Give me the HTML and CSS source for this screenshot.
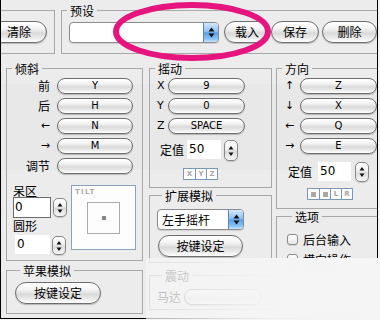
FILE: index.html
```html
<!DOCTYPE html>
<html lang="zh">
<head>
<meta charset="utf-8">
<title>Joystick</title>
<link rel="stylesheet" href="styles.css">
</head>
<body>
<div class="win">
  <div class="band"></div>
  <div class="top">
    <div class="clearbox"><span class="btn lg w56">清除</span></div>
    <fieldset class="grp preset">
      <legend>预设</legend>
      <div class="prow">
        <div class="popup w150"><span class="pv"></span><span class="pstep"><svg width="7" height="11" viewBox="0 0 7 11"><path d="M3.5 0.5 L6.5 4.5 H0.5Z M3.5 10.5 L6.5 6.5 H0.5Z" fill="#111"/></svg></span></div>
        <span class="btn lg w46 ml5">载入</span>
        <span class="btn lg w48 ml1">保存</span>
        <span class="btn lg w55 ml3">删除</span>
      </div>
    </fieldset>
  </div>

  <div class="main">
    <div class="col c1">
      <fieldset class="grp tilt">
        <legend>倾斜</legend>
        <div class="keys k1">
          <span class="lbl">前</span><span class="btn sm">Y</span>
          <span class="lbl">后</span><span class="btn sm">H</span>
          <span class="lbl arr">←</span><span class="btn sm">N</span>
          <span class="lbl arr">→</span><span class="btn sm">M</span>
          <span class="lbl">调节</span><span class="btn sm"></span>
        </div>
        <div class="lower">
          <div class="fields">
            <div class="flbl">呆区</div>
            <div class="frow r1"><span class="field focus w38">0</span><span class="stepper"><svg width="12" height="18" viewBox="0 0 12 18"><path d="M6 4 L8.5 7.5 H3.5Z M6 14 L8.5 10.5 H3.5Z" fill="#111"/></svg></span></div>
            <div class="flbl l2">圆形</div>
            <div class="frow r2"><span class="field w35">0</span><span class="stepper"><svg width="12" height="18" viewBox="0 0 12 18"><path d="M6 4 L8.5 7.5 H3.5Z M6 14 L8.5 10.5 H3.5Z" fill="#111"/></svg></span></div>
          </div>
          <div class="tiltbox">
            <div class="tiltlbl">TILT</div>
            <div class="pad"><span class="dot"></span></div>
          </div>
        </div>
      </fieldset>
      <fieldset class="grp apple">
        <legend>苹果模拟</legend>
        <span class="btn lg w86">按键设定</span>
      </fieldset>
    </div>

    <div class="col c2">
      <fieldset class="grp shake">
        <legend>摇动</legend>
        <div class="keys k2">
          <span class="lbl2">X</span><span class="btn sm">9</span>
          <span class="lbl2">Y</span><span class="btn sm">0</span>
          <span class="lbl2">Z</span><span class="btn sm">SPACE</span>
        </div>
        <div class="vrow v2">
          <span class="vlbl">定值</span><span class="field w34">50</span><span class="stepper st2"><svg width="12" height="18" viewBox="0 0 12 18"><path d="M6 4 L8.5 7.5 H3.5Z M6 14 L8.5 10.5 H3.5Z" fill="#111"/></svg></span>
        </div>
        <div class="strip s3"><span>X</span><span>Y</span><span>Z</span></div>
      </fieldset>
      <fieldset class="grp ext">
        <legend>扩展模拟</legend>
        <div class="popup w87"><span class="pv">左手摇杆</span><span class="pstep"><svg width="7" height="11" viewBox="0 0 7 11"><path d="M3.5 0.5 L6.5 4.5 H0.5Z M3.5 10.5 L6.5 6.5 H0.5Z" fill="#111"/></svg></span></div>
        <span class="btn lg w85 extbtn">按键设定</span>
      </fieldset>
      <fieldset class="grp vib">
        <legend>震动</legend>
        <div class="vibrow"><span class="vlbl">马达</span><span class="btn sm w78"></span></div>
      </fieldset>
    </div>

    <div class="col c3">
      <fieldset class="grp dir">
        <legend>方向</legend>
        <div class="keys k3">
          <span class="lbl arr">↑</span><span class="btn sm">Z</span>
          <span class="lbl arr">↓</span><span class="btn sm">X</span>
          <span class="lbl arr">←</span><span class="btn sm">Q</span>
          <span class="lbl arr">→</span><span class="btn sm">E</span>
        </div>
        <div class="vrow v3">
          <span class="vlbl">定值</span><span class="field w33">50</span><span class="stepper st3"><svg width="12" height="18" viewBox="0 0 12 18"><path d="M6 4 L8.5 7.5 H3.5Z M6 14 L8.5 10.5 H3.5Z" fill="#111"/></svg></span>
        </div>
        <div class="strip s4"><span class="sq"></span><span class="sq"></span><span>L</span><span>R</span></div>
      </fieldset>
      <fieldset class="grp opts">
        <legend>选项</legend>
        <label class="chk"><span class="box"></span>后台输入</label>
        <label class="chk"><span class="box"></span>横向操作</label>
      </fieldset>
    </div>
  </div>
</div>
<div class="fade"></div>
<svg class="mark" width="380" height="320" viewBox="0 0 380 320"><ellipse cx="192" cy="31.5" rx="76" ry="26.5" fill="none" stroke="#e5147e" stroke-width="6"/></svg>
</body>
</html>
```
FILE: styles.css
```css
* { box-sizing: border-box; }
body {
  margin: 0;
  background: #f4f4f4;
  font-family: "Noto Sans CJK SC", "DejaVu Sans", sans-serif;
  font-size: 12px;
  color: #000;
  position: relative;
  width: 380px;
  height: 320px;
  overflow: hidden;
}
.win {
  position: relative;
  width: 378px;
  height: 319px;
  border-left: 1px solid #000;
  border-right: 1px solid #000;
  border-bottom: 1px solid #000;
  background: #ececec;
  overflow: hidden;
}
.band {
  position: absolute;
  left: 0; right: 0;
  top: 84px; height: 86px;
  background: #e8e8e8;
}
.top, .main { position: relative; }

/* group boxes */
.grp {
  margin: 0;
  padding: 0;
  min-width: 0;
  border: 1px solid #a8a8a8;
  display: block;
}
.grp legend {
  margin-left: 5px;
  padding: 0 3px;
  line-height: 15px;
  height: 15px;
  font-size: 12px;
}

/* buttons */
.btn {
  display: block;
  flex: none;
  border: 1px solid #6e6e6e;
  background: linear-gradient(to bottom, #ffffff 0%, #f5f5f5 30%, #e4e4e4 48%, #d9d9d9 56%, #ebebeb 80%, #ffffff 100%);
  box-shadow: 0 1px 1px rgba(0,0,0,0.22);
  text-align: center;
  white-space: nowrap;
  color: #000;
}
.btn.lg { height: 22px; border-radius: 11px; line-height: 20px; font-size: 12px; }
.btn.sm { height: 16px; border-radius: 8px; line-height: 14px; font-family: "DejaVu Sans", sans-serif; font-size: 10px; }
.w56 { width: 56px; } .w46 { width: 46px; } .w48 { width: 48px; } .w55 { width: 55px; }
.w86 { width: 86px; } .w85 { width: 85px; } .w78 { width: 78px; }
.ml5 { margin-left: 5px; } .ml1 { margin-left: 1px; } .ml3 { margin-left: 3px; }

/* top row */
.top { display: flex; align-items: flex-start; margin-top: 3px; height: 51px; }
.clearbox {
  flex: none;
  margin-top: 7px;
  width: 54px;
  height: 44px;
  border: 1px solid #a8a8a8;
  border-left: 0;
  display: flex;
  justify-content: flex-end;
  align-items: flex-start;
  padding: 10px 7px 0 0;
  overflow: hidden;
}
.preset { flex: none; width: 330px; margin-left: 6px; height: 51px; }
.prow { display: flex; align-items: flex-start; margin: 3px 0 0 7px; }

/* popup */
.popup {
  display: flex;
  flex: none;
  height: 21px;
  border: 1px solid #8c8c8c;
  border-radius: 4px;
  background: #fff;
  overflow: hidden;
  box-shadow: 0 1px 1px rgba(0,0,0,0.12);
}
.prow .popup { margin-top: 1px; }
.w150 { width: 150px; } .w87 { width: 87px; }
.pv { flex: 1; padding-left: 4px; line-height: 19px; font-size: 12px; }
.pstep {
  width: 15px;
  border-left: 1px solid #5c86b8;
  background: linear-gradient(to bottom, #d5e8fb 0%, #8cc0f2 45%, #5a9fe6 52%, #8ac4f6 85%, #c8e6ff 100%);
  display: flex;
  align-items: center;
  justify-content: center;
}

/* main columns */
.main { display: flex; align-items: flex-start; margin-top: 7px; padding-left: 5px; }
.col { flex: none; display: flex; flex-direction: column; }
.c1 { width: 137px; }
.c2 { width: 123px; margin-left: 6px; }
.c3 { width: 122px; margin-left: 4px; }

/* key grids */
.keys { display: grid; row-gap: 4px; grid-auto-rows: 16px; align-items: center; padding-top: 2px; }
.k1 { grid-template-columns: 43px 76px; column-gap: 7px; padding-left: 0; }
.k2 { grid-template-columns: 12px 77px; padding-left: 6px; }
.k3 { grid-template-columns: 16px 77px; padding-left: 7px; }
.lbl { text-align: right; line-height: 16px; font-size: 12px; }
.k3 .lbl { text-align: left; padding-left: 1px; }
.lbl.arr { font-family: "DejaVu Sans", sans-serif; font-size: 11px; }
.lbl2 { font-family: "DejaVu Sans", sans-serif; font-size: 11px; line-height: 16px; padding-left: 1px; }

/* tilt */
.tilt { height: 200px; }
.lower { display: flex; align-items: flex-start; margin-top: 10px; padding-left: 6px; }
.fields { width: 55px; flex: none; }
.flbl { height: 13px; line-height: 13px; font-size: 12px; }
.flbl.l2 { margin-top: 1px; }
.frow { display: flex; align-items: flex-start; }
.frow.r1 { height: 21px; }
.frow.r2 { margin-top: 3px; }
.field {
  display: block;
  flex: none;
  height: 19px;
  background: #fff;
  font-family: "DejaVu Sans", sans-serif;
  font-size: 12px;
  line-height: 19px;
  padding-left: 2px;
}
.field.focus { height: 21px; border: 1px solid #6b6b6b; line-height: 19px; padding-left: 1px; }
.w38 { width: 38px; } .w35 { width: 35px; margin-left: 2px; } .w34 { width: 34px; } .w33 { width: 33px; }
.stepper {
  display: flex;
  align-items: center;
  justify-content: center;
  flex: none;
  width: 14px;
  height: 19px;
  margin-left: 2px;
  border: 1px solid #868686;
  border-radius: 5px;
  background: linear-gradient(to bottom, #ffffff 0%, #efefef 45%, #dcdcdc 55%, #f6f6f6 100%);
  box-shadow: 0 1px 1px rgba(0,0,0,0.15);
}
.r2 .stepper { margin-top: 1px; margin-left: 2px; }
.r1 .stepper { margin-top: 1px; margin-left: 2px; }
.tiltbox {
  flex: none;
  width: 65px;
  height: 65px;
  margin: 1px 0 0 3px;
  border: 1px solid #8ba1bc;
  background: #fdfdfd;
  padding: 3px 0 0 3px;
}
.tiltlbl {
  font-family: "DejaVu Sans", sans-serif;
  font-weight: bold;
  font-size: 7px;
  line-height: 7px;
  letter-spacing: 1.3px;
  color: #ababab;
}
.pad {
  width: 33px;
  height: 32px;
  margin: 6px 0 0 12px;
  border: 1px solid #ababab;
  display: flex;
  align-items: center;
  justify-content: center;
}
.dot { width: 4px; height: 4px; background: #858585; }

.apple { margin-top: 2px; height: 51px; padding: 4px 0 0 8px; }

/* shake */
.shake { height: 127px; }
.vrow { display: flex; align-items: flex-start; }
.vlbl { line-height: 19px; font-size: 12px; width: 24px; flex: none; }
.v2 { margin: 6px 0 0 10px; }
.v2 .field { margin-left: 3px; }
.st2 { margin-left: 3px; height: 21px; }
.strip {
  display: flex;
  width: max-content;
  border: 1px solid #7c98b8;
  background: #fff;
  height: 12px;
}
.strip span {
  width: 11px;
  height: 10px;
  display: flex;
  align-items: center;
  justify-content: center;
  font-family: "DejaVu Sans", sans-serif;
  font-weight: bold;
  font-size: 7px;
  color: #a5a5a5;
}
.strip span + span { border-left: 1px solid #7c98b8; }
.strip span.sq::after { content: ""; width: 5px; height: 5px; background: #a8a8a8; }
.s3 { margin: 7px 0 0 33px; }
.s4 { margin: 6px 0 0 30px; }

/* ext */
.ext { height: 75px; padding: 6px 0 0 7px; }
.extbtn { margin: 5px 0 0 1px; }
.vib { margin-top: 5px; height: 42px; padding: 4px 0 0 7px; }
.vibrow { display: flex; align-items: center; }
.vibrow .btn { margin-left: 3px; }

/* direction */
.dir { height: 148px; }
.v3 { margin: 8px 0 0 11px; }
.v3 .field { margin-left: 6px; }
.st3 { margin-left: 4px; height: 20px; }

/* options */
.opts { height: 120px; padding: 9px 0 0 10px; }
.chk { display: flex; align-items: center; height: 13px; line-height: 13px; margin-bottom: 7px; font-size: 12px; }
.box {
  width: 11px;
  height: 11px;
  margin-right: 5px;
  border: 1px solid #8a8a8a;
  border-radius: 3px;
  background: linear-gradient(to bottom, #ffffff, #e6e6e6);
  box-shadow: 0 1px 1px rgba(0,0,0,0.12);
}

/* overlays */
.fade {
  position: absolute;
  left: 146px;
  top: 258px;
  width: 234px;
  height: 62px;
  background: linear-gradient(to right, rgba(245,245,245,0.72) 0%, rgba(245,245,245,0.9) 35%, rgba(245,245,245,0.98) 55%, #f5f5f5 100%);
}
.mark { position: absolute; left: 0; top: 0; pointer-events: none; }
```
